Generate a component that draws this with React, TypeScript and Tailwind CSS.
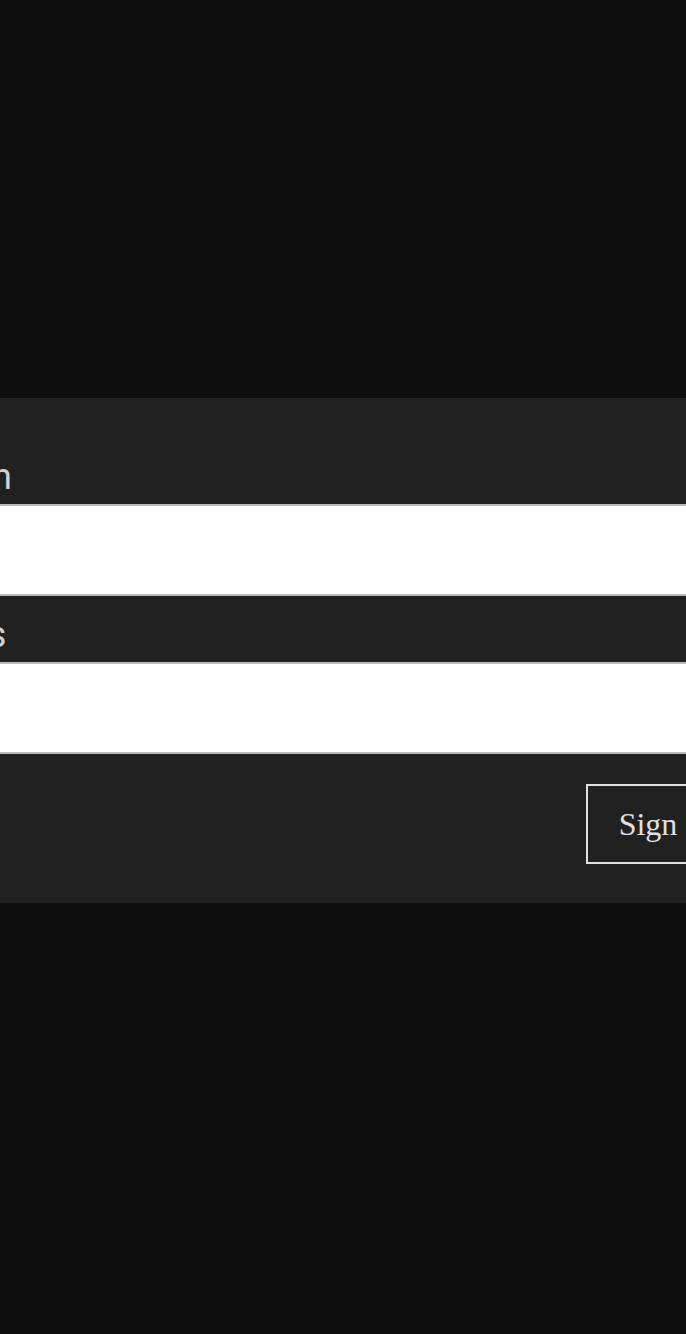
import React from 'react';

const labelClass =
  "flex items-end pb-[9px] text-[36px] leading-none text-[#d2d2d2] font-['Roboto',sans-serif]";

const inputClass =
  'block w-full h-[92px] bg-white border-y-2 border-[#b9bbbe] outline-none px-[180px] text-[32px] text-black';

export default function App() {
  return (
    <div className="min-h-screen w-full overflow-hidden bg-[#0e0e0e] flex justify-center pt-[398px]">
      <form className="w-[1200px] shrink-0 self-start bg-[#212121]">
        <label htmlFor="login" className={`${labelClass} h-[106px] pl-[180px]`}>
          Login
        </label>
        <input id="login" type="text" className={inputClass} />

        <label htmlFor="pass" className={`${labelClass} h-[66px] pl-[184px]`}>
          Pass
        </label>
        <input id="pass" type="password" className={inputClass} />

        <div className="flex justify-end pt-[30px] pb-[39px] pr-[199px]">
          <button
            type="submit"
            className="h-[80px] border-2 border-[#e0e0e0] pl-[31px] pr-[30px] text-[32px] text-[#e0e0e0] font-['Liberation_Serif',serif]"
          >
            Sign In
          </button>
        </div>
      </form>
    </div>
  );
}
